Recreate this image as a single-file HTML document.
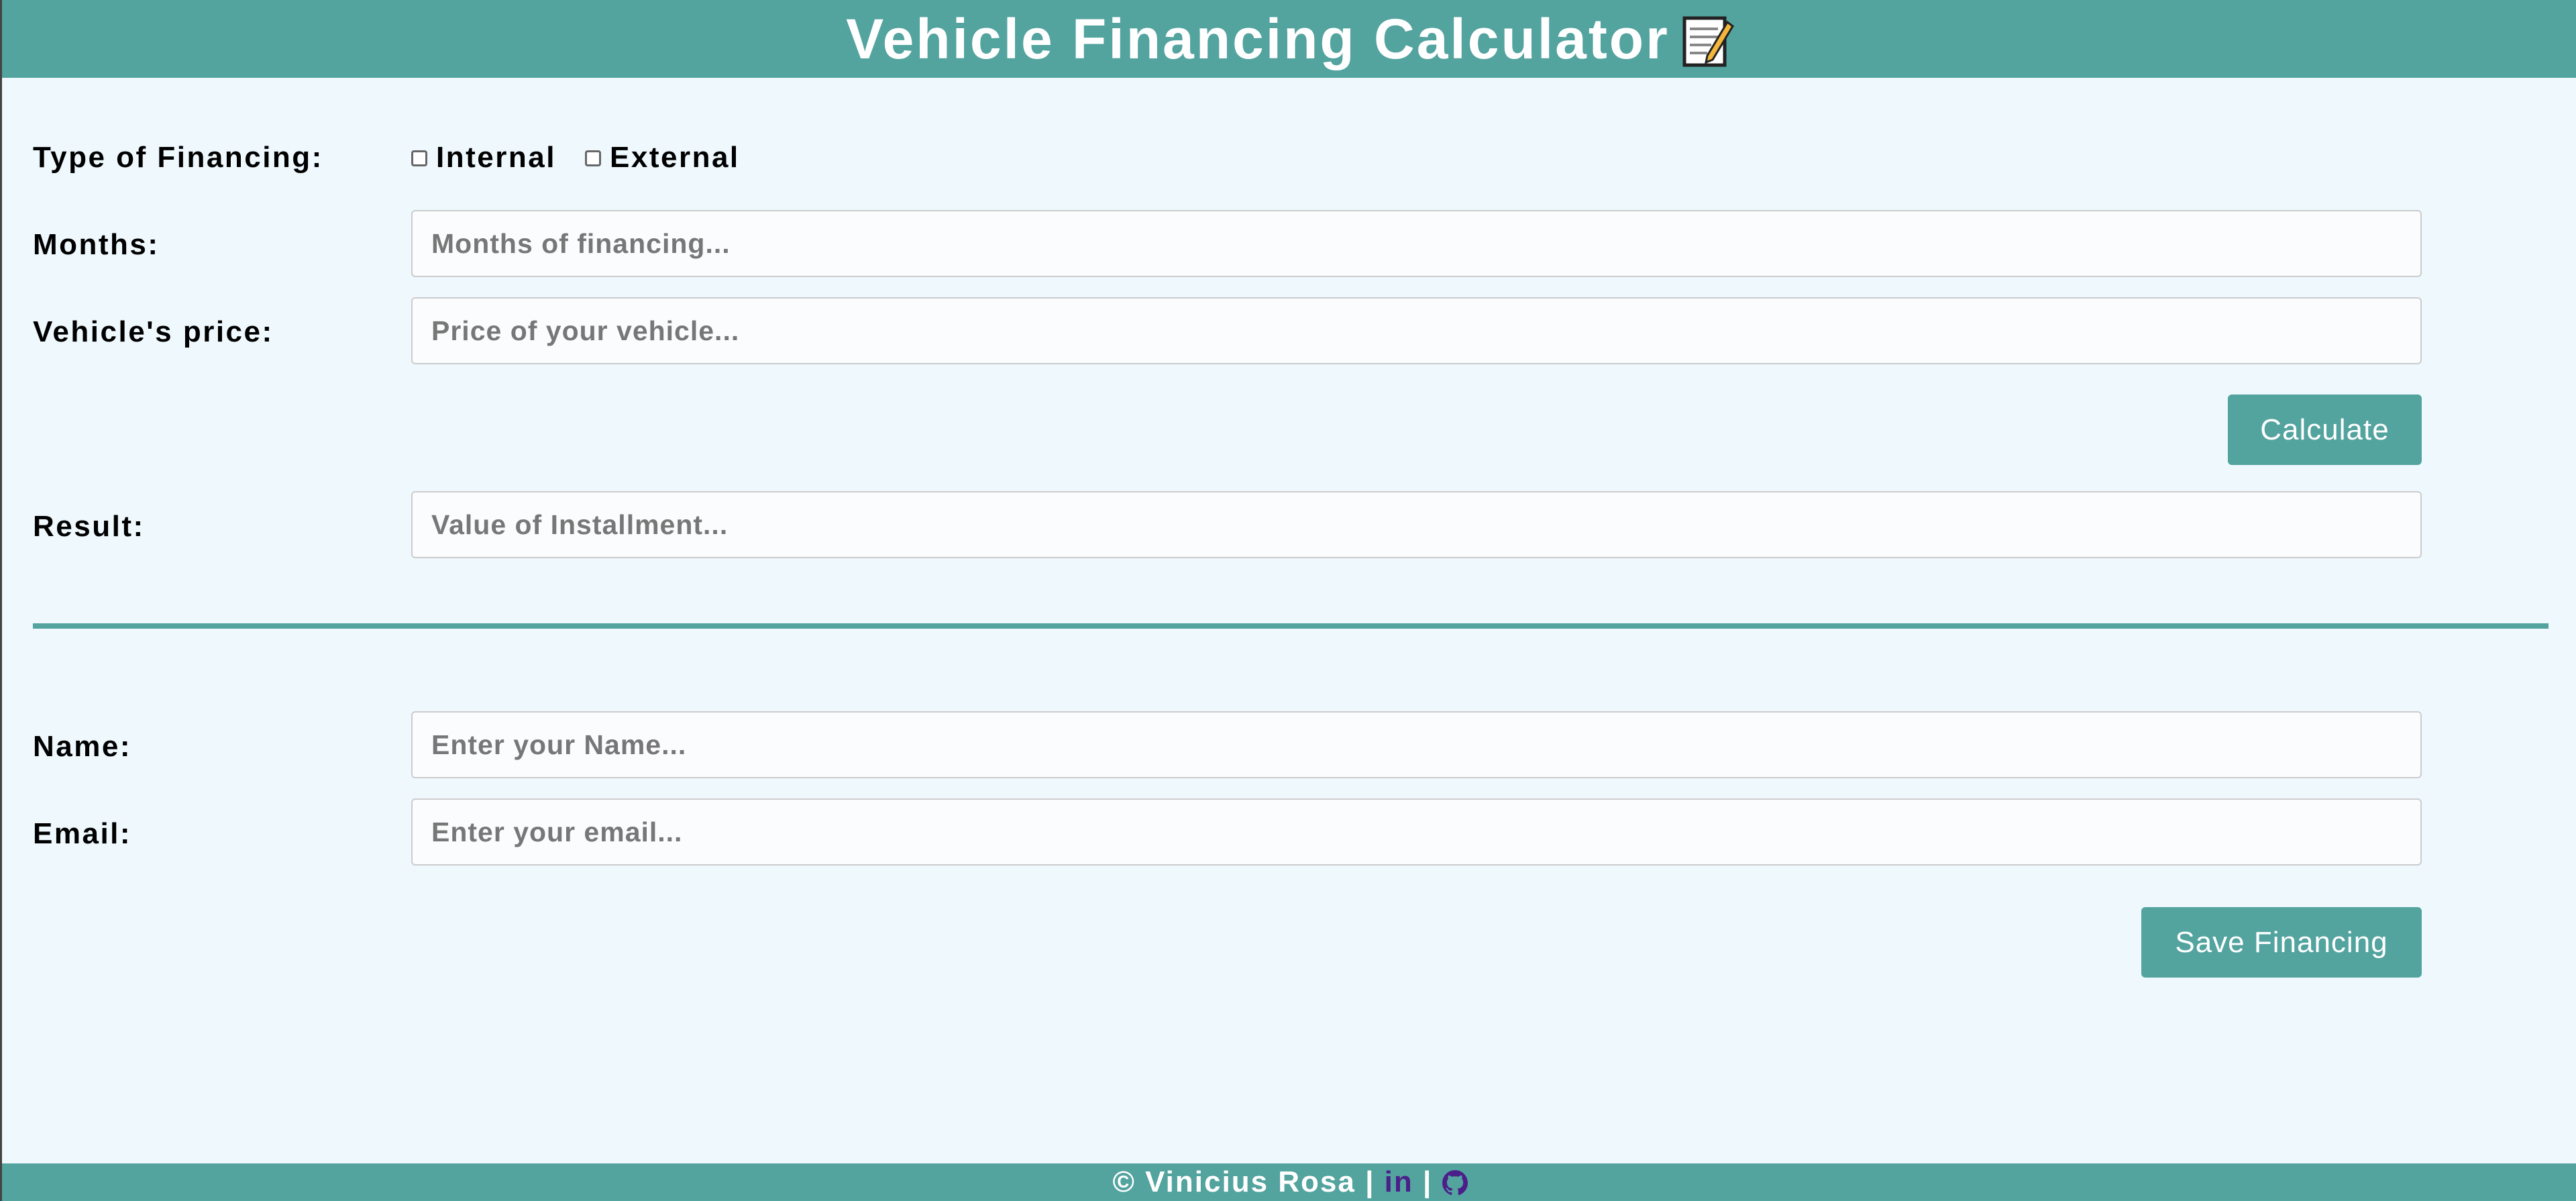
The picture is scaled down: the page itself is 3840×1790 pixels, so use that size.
<!DOCTYPE html>
<html><head><meta charset="utf-8"><style>
*{box-sizing:border-box;margin:0;padding:0}
html,body{width:3840px;height:1790px;overflow:hidden}
body{background:#eef8fd;font-family:"Liberation Sans",sans-serif;position:relative;border-left:3px solid #444}
.hdr{position:absolute;left:0;top:0;width:3840px;height:116px;background:#53a39f;color:#fff;font-weight:bold;font-size:84px;text-align:center;line-height:116px;letter-spacing:3px}
.hdr svg{vertical-align:-14px;margin-left:16px}
.lbl{position:absolute;left:46px;font-weight:bold;font-size:44px;letter-spacing:2.5px;color:#000}
.inp{position:absolute;left:610px;width:2997px;height:100px;background:#fbfcfe;border:2px solid #ccc;border-radius:6px;color:#777;font-weight:bold;font-size:41px;letter-spacing:1px;line-height:96px;padding-left:28px}
.cb{position:absolute;width:24px;height:24px;border:3px solid #666;border-radius:4px;background:#fff}
.btn{position:absolute;background:#53a39f;color:#fff;font-size:44px;letter-spacing:1px;text-align:center;border-radius:6px;line-height:105px;height:105px}
.line{position:absolute;left:46px;top:929px;width:3750px;height:8px;background:#53a39f}
.ftr{position:absolute;left:0;top:1734px;width:3840px;height:56px;background:#53a39f;color:#fff;font-weight:bold;font-size:44px;letter-spacing:2px;text-align:center;line-height:56px}
.ftr .p{color:#4b1f8a}
</style></head><body>
<div class="hdr">Vehicle Financing Calculator<svg width="80" height="80" viewBox="0 0 80 80"><rect x="6" y="6" width="60" height="70" fill="#fff" stroke="#222" stroke-width="5"/><g stroke="#888" stroke-width="4"><line x1="14" y1="22" x2="56" y2="22"/><line x1="14" y1="34" x2="56" y2="34"/><line x1="14" y1="46" x2="46" y2="46"/><line x1="14" y1="58" x2="40" y2="58"/></g><path d="M40 62 L70 12 L78 18 L48 68 L38 72 Z" fill="#f4b63a" stroke="#222" stroke-width="3"/></svg></div>

<div class="lbl" style="top:210px">Type of Financing:</div>
<div class="cb" style="left:610px;top:224px"></div>
<div class="lbl" style="left:647px;top:210px">Internal</div>
<div class="cb" style="left:869px;top:224px"></div>
<div class="lbl" style="left:906px;top:210px">External</div>

<div class="lbl" style="top:340px">Months:</div>
<div class="inp" style="top:313px">Months of financing...</div>
<div class="lbl" style="top:470px">Vehicle's price:</div>
<div class="inp" style="top:443px">Price of your vehicle...</div>
<div class="btn" style="left:3318px;top:588px;width:289px">Calculate</div>
<div class="lbl" style="top:760px">Result:</div>
<div class="inp" style="top:732px">Value of Installment...</div>

<div class="line"></div>

<div class="lbl" style="top:1088px">Name:</div>
<div class="inp" style="top:1060px">Enter your Name...</div>
<div class="lbl" style="top:1218px">Email:</div>
<div class="inp" style="top:1190px">Enter your email...</div>
<div class="btn" style="left:3189px;top:1352px;width:418px">Save Financing</div>

<div class="ftr">© Vinicius Rosa | <span class="p">in</span> | <svg width="38" height="38" viewBox="0 0 16 16" style="vertical-align:-6px"><path fill="#4b1f8a" d="M8 0C3.58 0 0 3.58 0 8c0 3.54 2.29 6.53 5.47 7.59.4.07.55-.17.55-.38v-1.33c-2.23.48-2.7-1.07-2.7-1.07-.36-.92-.89-1.17-.89-1.17-.73-.5.06-.49.06-.49.8.06 1.23.83 1.23.83.71 1.22 1.87.87 2.33.66.07-.52.28-.87.51-1.07-1.78-.2-3.64-.89-3.64-3.95 0-.87.31-1.59.82-2.15-.08-.2-.36-1.02.08-2.12 0 0 .67-.21 2.2.82a7.6 7.6 0 014 0c1.53-1.04 2.2-.82 2.2-.82.44 1.1.16 1.92.08 2.12.51.56.82 1.27.82 2.15 0 3.07-1.87 3.75-3.65 3.95.29.25.54.73.54 1.48v2.2c0 .21.15.46.55.38A8 8 0 0016 8c0-4.42-3.58-8-8-8z"/></svg></div>
</body></html>
